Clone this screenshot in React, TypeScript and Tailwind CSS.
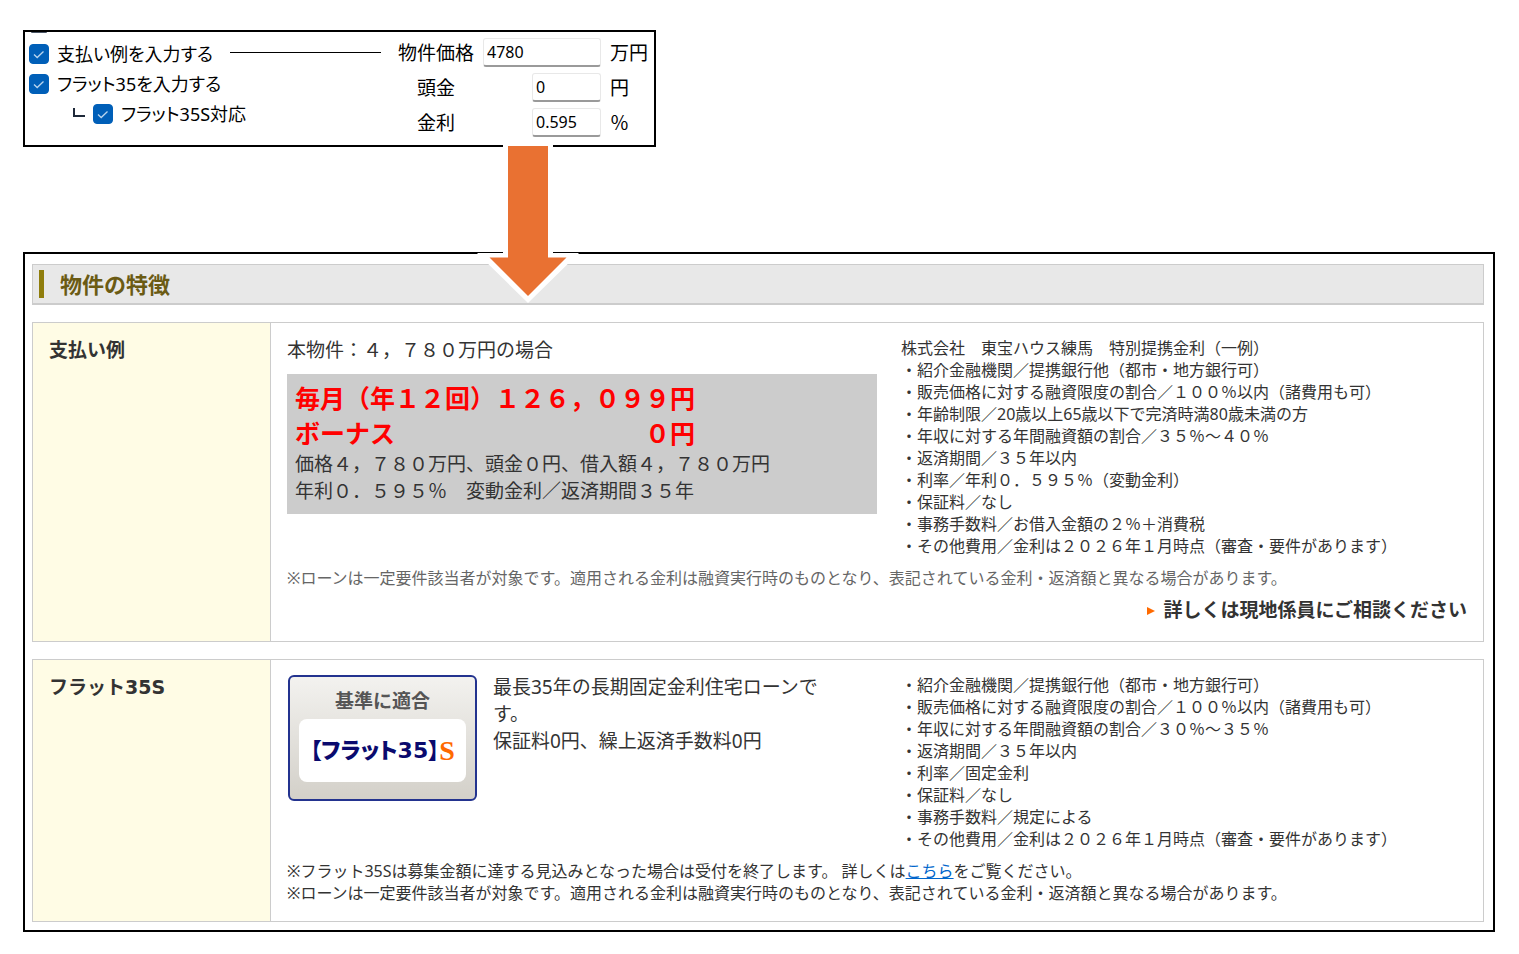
import React from 'react';

interface CheckOptionProps {
  id: string;
  label: string;
}

interface NumberFieldProps {
  id: string;
  label: string;
  value: string;
  unit: string;
  inputClass: string;
}

interface FeatureBlockProps {
  title: string;
  children: React.ReactNode;
}

const loanTerms = [
  '株式会社　東宝ハウス練馬　特別提携金利（一例）',
  '・紹介金融機関／提携銀行他（都市・地方銀行可）',
  '・販売価格に対する融資限度の割合／１００％以内（諸費用も可）',
  '・年齢制限／20歳以上65歳以下で完済時満80歳未満の方',
  '・年収に対する年間融資額の割合／３５％～４０％',
  '・返済期間／３５年以内',
  '・利率／年利０．５９５％（変動金利）',
  '・保証料／なし',
  '・事務手数料／お借入金額の２％＋消費税',
  '・その他費用／金利は２０２６年１月時点（審査・要件があります）',
];

const flatTerms = [
  '・紹介金融機関／提携銀行他（都市・地方銀行可）',
  '・販売価格に対する融資限度の割合／１００％以内（諸費用も可）',
  '・年収に対する年間融資額の割合／３０％～３５％',
  '・返済期間／３５年以内',
  '・利率／固定金利',
  '・保証料／なし',
  '・事務手数料／規定による',
  '・その他費用／金利は２０２６年１月時点（審査・要件があります）',
];

function CheckOption({ id, label }: CheckOptionProps) {
  return (
    <div className="flex items-center gap-2">
      <span className="relative flex size-5">
        <input
          id={id}
          type="checkbox"
          defaultChecked
          className="peer size-5 appearance-none rounded border border-[#005fb8] bg-white checked:bg-[#005fb8]"
        />
        <svg
          viewBox="0 0 20 20"
          className="pointer-events-none absolute inset-0 size-5 opacity-0 peer-checked:opacity-100"
          fill="none"
          stroke="#b9d5ee"
          strokeWidth="1.3"
        >
          <path d="M5 10.5l3.2 3L14.5 7.5" />
        </svg>
      </span>
      <label htmlFor={id} className="whitespace-nowrap text-lg leading-7 [font-feature-settings:'palt']">
        {label}
      </label>
    </div>
  );
}

function NumberField({ id, label, value, unit, inputClass }: NumberFieldProps) {
  return (
    <>
      <label htmlFor={id} className="text-center text-[19px] leading-7">
        {label}
      </label>
      <input
        id={id}
        type="text"
        defaultValue={value}
        className={`h-[29px] justify-self-end rounded-[3px] border border-b-2 border-[#e8e8e8] border-b-[#9a9a9a] bg-white px-[3px] text-base ${inputClass}`}
      />
      <span className="text-[19px] leading-7">{unit}</span>
    </>
  );
}

function InputPanel() {
  return (
    <div className="flex w-[633px] max-w-full items-start border-2 border-black pb-2 pl-1 text-black">
      <div className="w-[190px]">
        {/* Lower edge of the option scrolled out above */}
        <div className="ml-0.5 h-px w-4 rounded-b bg-gray-600"></div>
        <div className="flex flex-col gap-[2px] pt-[7px]">
          <CheckOption id="payment" label="支払い例を入力する" />
          <CheckOption id="flat35" label="フラット35を入力する" />
          <div className="flex items-center gap-2 pl-11">
            <span className="mb-1 h-[9px] w-3 shrink-0 border-b-2 border-l-2 border-gray-800"></span>
            <CheckOption id="flat35s" label="フラット35S対応" />
          </div>
        </div>
      </div>
      <div className="ml-auto flex items-start pr-1">
        <div className="mt-5 mr-[17px] h-px w-[151px] bg-black"></div>
        <div className="grid grid-cols-[76px_118px_40px] items-center gap-x-[9px] gap-y-[6px] pt-[6px]">
          <NumberField id="price" label="物件価格" value="4780" unit="万円" inputClass="w-full" />
          <NumberField id="deposit" label="頭金" value="0" unit="円" inputClass="w-[69px]" />
          <NumberField id="rate" label="金利" value="0.595" unit="％" inputClass="w-[69px]" />
        </div>
      </div>
    </div>
  );
}

function DownArrow() {
  return (
    <svg
      viewBox="477 144 102 159"
      className="absolute top-[114px] left-[454px] h-[159px] w-[102px]"
      aria-hidden="true"
    >
      <path d="M503 144H553V253H579L528 303L477 253H503Z" fill="#fff" />
      <path d="M508 146H548V257.5H566.5L528 296L489.5 257.5H508Z" fill="#e97132" />
    </svg>
  );
}

function FeatureBlock({ title, children }: FeatureBlockProps) {
  return (
    <table className="mt-[17px] w-full border-collapse border border-[#ccc]">
      <tbody>
        <tr>
          <th
            scope="row"
            className="w-[238px] border-r border-[#ccc] bg-[#fffce5] px-4 pt-[14px] text-left align-top font-['DejaVu_Sans','Noto_Sans_CJK_JP',sans-serif] text-[19px] leading-[27px] font-bold"
          >
            {title}
          </th>
          <td className="px-4 pt-[14px] pb-[17px] align-top">{children}</td>
        </tr>
      </tbody>
    </table>
  );
}

function TermList({ items }: { items: string[] }) {
  return (
    <ul className="w-1/2 pl-6 text-base leading-[22px]">
      {items.map((item) => (
        <li key={item}>{item}</li>
      ))}
    </ul>
  );
}

function Flat35Badge() {
  return (
    <div className="mt-px ml-px flex h-[126px] w-[189px] shrink-0 flex-col items-center rounded-md border-2 border-[#23338f] bg-linear-to-b from-[#f3f2ef] to-[#d3d0c9] pt-[11px]">
      <span className="text-[19px] leading-[27px] font-bold text-[#555]">基準に適合</span>
      <div className="mt-1 flex h-[63px] w-[167px] items-center justify-center rounded-lg bg-white leading-[27px] font-bold">
        <span className="font-['DejaVu_Sans','Noto_Sans_CJK_JP',sans-serif] text-[22px] font-black whitespace-nowrap text-[#0a0a6e] [font-feature-settings:'palt']">
          【フラット35】
        </span>
        <span className="font-['Liberation_Serif',serif] text-[28px] text-[#ff6a00]">S</span>
      </div>
    </div>
  );
}

export default function App() {
  return (
    <main className="relative bg-white font-['Noto_Sans','Noto_Sans_CJK_JP',sans-serif] text-[#333]">
      <div className="pt-[30px] pr-6 pb-[22px] pl-[23px]">
        <div className="relative">
          <InputPanel />

          <section className="mt-[105px] border-2 border-black pt-[10px] pr-[9px] pb-2 pl-[7px]">
            <h2 className="flex h-[41px] items-center border border-b-2 border-[#ccc] bg-[#e8e8e8] pl-[6px] text-[22px] font-bold text-[#6b5b14]">
              <span className="mr-4 h-7 w-[5px] bg-[#8f7d0c]"></span>
              物件の特徴
            </h2>

            <FeatureBlock title="支払い例">
              <div className="flex">
                <div className="w-1/2">
                  <p className="text-[19px] leading-[27px]">本物件：４，７８０万円の場合</p>
                  <div className="mt-[10px] bg-[#ccc] px-2 pt-[7px] pb-[9px] text-[19px] leading-[27px]">
                    <p className="text-[25px] leading-[35px] font-bold text-[#f00]">
                      毎月（年１２回）１２６，０９９円
                    </p>
                    <p className="text-[25px] leading-[35px] font-bold whitespace-pre text-[#f00]">
                      ボーナス　　　　　　　　　　０円
                    </p>
                    <p>価格４，７８０万円、頭金０円、借入額４，７８０万円</p>
                    <p>年利０．５９５％　変動金利／返済期間３５年</p>
                  </div>
                </div>
                <TermList items={loanTerms} />
              </div>
              <p className="mt-[10px] text-base leading-[22px] text-[#666]">
                ※ローンは一定要件該当者が対象です。適用される金利は融資実行時のものとなり、表記されている金利・返済額と異なる場合があります。
              </p>
              <p className="mt-2 flex items-center justify-end gap-2 text-[19px] leading-[27px] font-bold">
                <svg viewBox="0 0 8 8" className="size-2" fill="#ff6a00" aria-hidden="true">
                  <path d="M0 0L8 4L0 8Z" />
                </svg>
                詳しくは現地係員にご相談ください
              </p>
            </FeatureBlock>

            <FeatureBlock title="フラット35S">
              <div className="flex">
                <div className="flex w-1/2 gap-4 pr-8">
                  <Flat35Badge />
                  <p className="text-[19px] leading-[27px]">
                    最長35年の長期固定金利住宅ローンです。
                    <br />
                    保証料0円、繰上返済手数料0円
                  </p>
                </div>
                <TermList items={flatTerms} />
              </div>
              <div className="mt-[10px] text-base leading-[22px]">
                <p>
                  ※フラット35Sは募集金額に達する見込みとなった場合は受付を終了します。 詳しくは
                  <a href="#flat35" className="text-[#0066cc] underline">
                    こちら
                  </a>
                  をご覧ください。
                </p>
                <p>
                  ※ローンは一定要件該当者が対象です。適用される金利は融資実行時のものとなり、表記されている金利・返済額と異なる場合があります。
                </p>
              </div>
            </FeatureBlock>
          </section>

          <DownArrow />
        </div>
      </div>
    </main>
  );
}
